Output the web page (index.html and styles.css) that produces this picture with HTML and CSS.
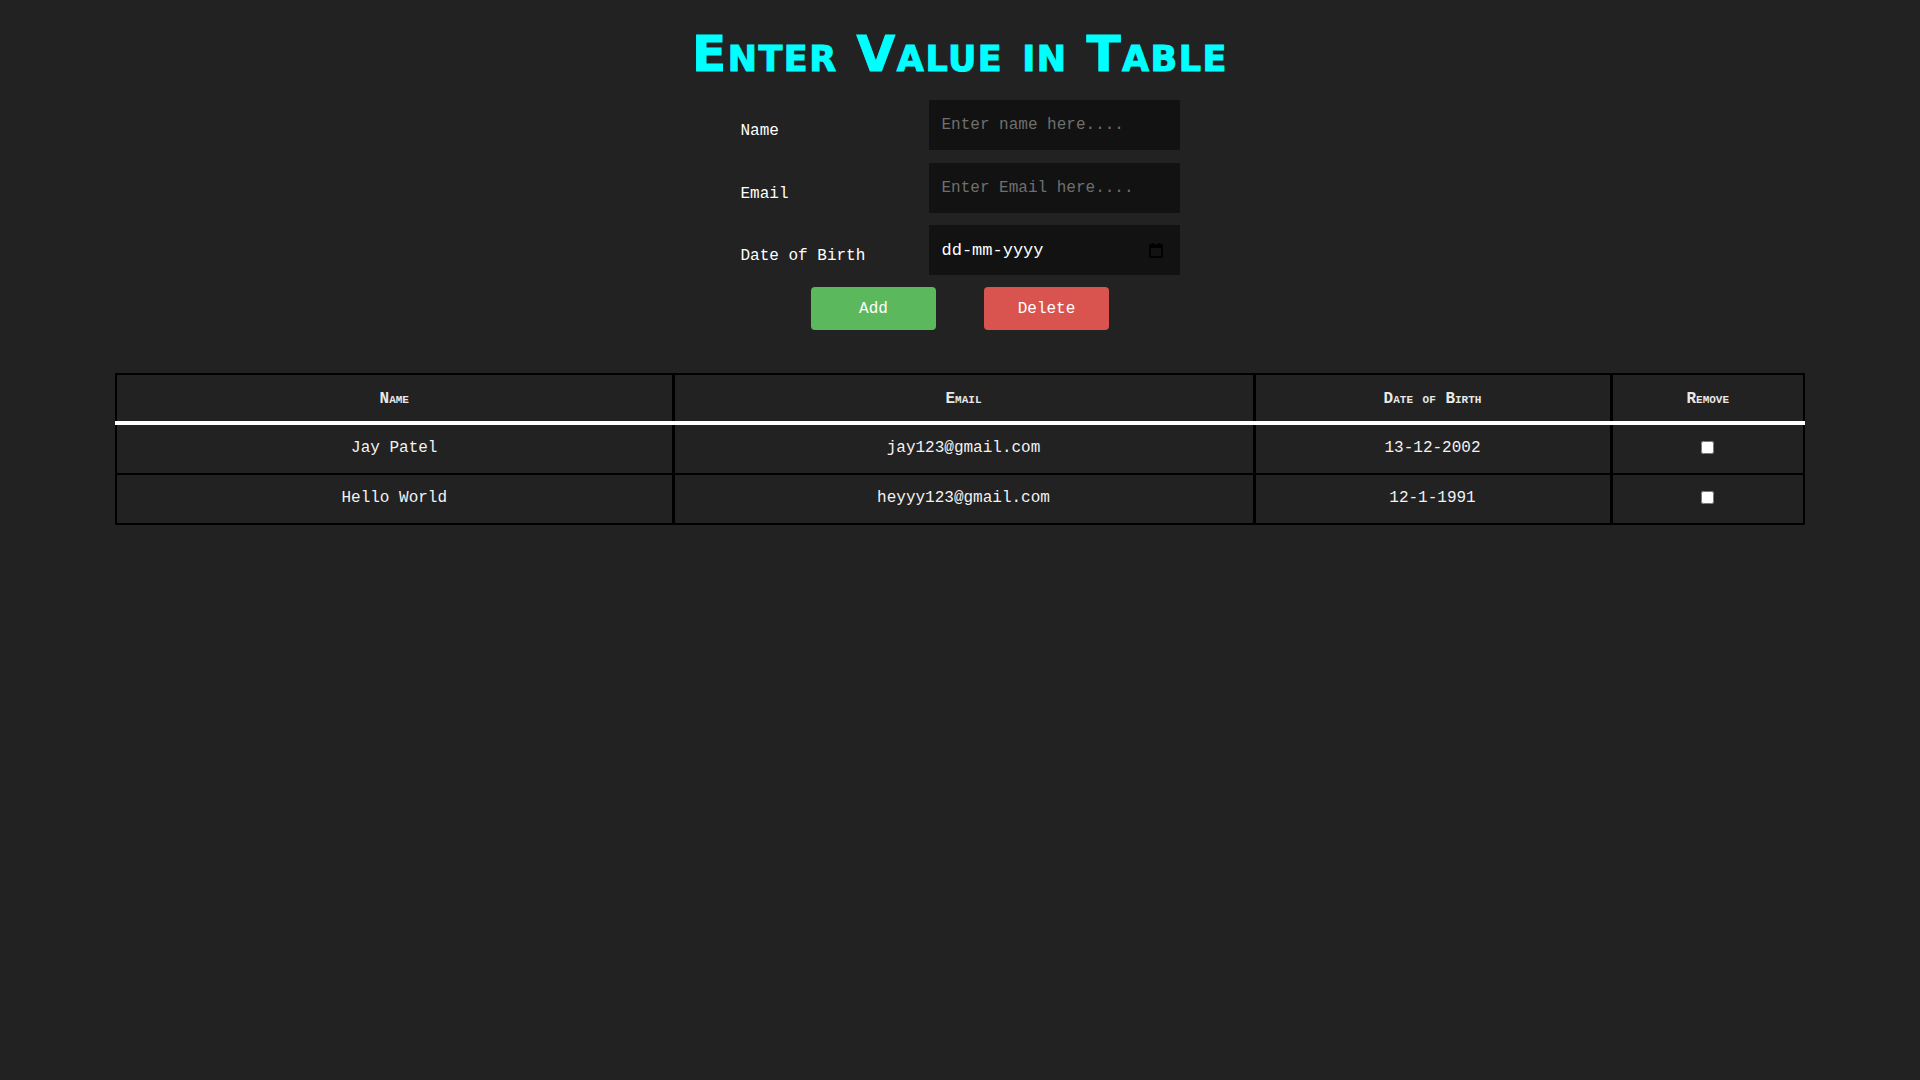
FILE: index.html
```html
<!DOCTYPE html>
<html lang="en">
<head>
<meta charset="utf-8">
<title>Enter Value in Table</title>
<link rel="stylesheet" href="styles.css">
</head>
<body>
<h1 class="title">Enter Value in Table</h1>
<form class="entry-form">
  <div class="fields">
    <label class="field-label" for="name">Name</label>
    <input class="field-input" id="name" type="text" placeholder="Enter name here....">
    <label class="field-label" for="email">Email</label>
    <input class="field-input" id="email" type="email" placeholder="Enter Email here....">
    <label class="field-label" for="dob">Date of Birth</label>
    <div class="date-field">
      <input class="date-input" id="dob" type="text" placeholder="dd-mm-yyyy">
      <svg class="cal-icon" width="14" height="16" viewBox="0 0 14 16" aria-hidden="true">
        <rect x="1" y="3" width="12" height="12" fill="none" stroke="#000" stroke-width="1.6"/>
        <rect x="1" y="3" width="12" height="3" fill="#000"/>
        <rect x="3" y="1" width="1.6" height="3" fill="#000"/>
        <rect x="9.4" y="1" width="1.6" height="3" fill="#000"/>
      </svg>
    </div>
  </div>
  <div class="actions">
    <button type="button" class="btn btn-add">Add</button>
    <button type="button" class="btn btn-delete">Delete</button>
  </div>
</form>
<table class="data-table">
  <thead>
    <tr>
      <th class="col-name">Name</th>
      <th class="col-email">Email</th>
      <th class="col-dob">Date of Birth</th>
      <th class="col-remove">Remove</th>
    </tr>
  </thead>
  <tbody>
    <tr>
      <td>Jay Patel</td>
      <td>jay123@gmail.com</td>
      <td>13-12-2002</td>
      <td><input type="checkbox" class="remove-check"></td>
    </tr>
    <tr>
      <td>Hello World</td>
      <td>heyyy123@gmail.com</td>
      <td>12-1-1991</td>
      <td><input type="checkbox" class="remove-check"></td>
    </tr>
  </tbody>
</table>
</body>
</html>
```

FILE: styles.css
```css
html, body {
  margin: 0;
  padding: 0;
  background: #222222;
}

body {
  font-family: "Liberation Mono", "DejaVu Sans Mono", monospace;
  font-size: 16px;
  color: #ffffff;
}

.title {
  margin: 26px 0 0;
  text-align: center;
  font-family: "DejaVu Sans", "Liberation Sans", sans-serif;
  font-weight: 900;
  font-size: 50px;
  line-height: 56px;
  letter-spacing: 1.5px;
  font-variant: small-caps;
  color: #00ffff;
  -webkit-text-stroke: 1px #00ffff;
}

.entry-form {
  display: flex;
  flex-direction: column;
  align-items: center;
  margin-top: 18px;
}

.fields {
  display: grid;
  grid-template-columns: 188px 251px;
  grid-auto-rows: 50px;
  row-gap: 12.5px;
  align-items: center;
}

.field-label {
  padding-top: 12px;
  color: #ffffff;
}

.field-input {
  box-sizing: border-box;
  width: 251px;
  height: 50px;
  border: none;
  outline: none;
  background: #121212;
  color: #ffffff;
  font-family: "Liberation Mono", "DejaVu Sans Mono", monospace;
  font-size: 16px;
  padding: 0 13px;
}

.field-input::placeholder {
  color: #6f6f6f;
}

.date-field {
  box-sizing: border-box;
  width: 251px;
  height: 50px;
  display: flex;
  align-items: center;
  background: #121212;
  padding: 0 17px 0 13px;
}

.date-input {
  flex: 1;
  min-width: 0;
  border: none;
  outline: none;
  background: transparent;
  padding: 0;
  color: #ffffff;
  font-family: "Liberation Mono", "DejaVu Sans Mono", monospace;
  font-size: 17px;
}

.date-input::placeholder {
  color: #ffffff;
}

.cal-icon {
  flex: none;
  display: block;
}

.actions {
  display: flex;
  gap: 48px;
  margin-top: 12px;
}

.btn {
  width: 125px;
  height: 43px;
  border: none;
  border-radius: 4px;
  color: #ffffff;
  font-family: "Liberation Mono", "DejaVu Sans Mono", monospace;
  font-size: 16px;
  cursor: pointer;
}

.btn-add {
  background: #5cb85c;
}

.btn-delete {
  background: #d9534f;
}

.data-table {
  width: 1690px;
  margin: 43px auto 0;
  border-collapse: collapse;
  table-layout: fixed;
}

.data-table th,
.data-table td {
  box-sizing: border-box;
  border: 2px solid #000000;
  text-align: center;
  line-height: 18px;
}

.data-table th + th,
.data-table td + td {
  border-left: 3px solid #000000;
}

.data-table th {
  padding: 15px 8px 13px;
  font-weight: bold;
  font-variant: small-caps;
  color: #e8e8e8;
  border-bottom: 4px solid #ffffff;
}

.data-table td {
  padding: 14px 8px 16px;
  color: #f2f2f2;
}

.col-name { width: 557px; }
.col-email { width: 581px; }
.col-dob { width: 357px; }

.remove-check {
  margin: 0;
  width: 13px;
  height: 13px;
  vertical-align: middle;
}
```
